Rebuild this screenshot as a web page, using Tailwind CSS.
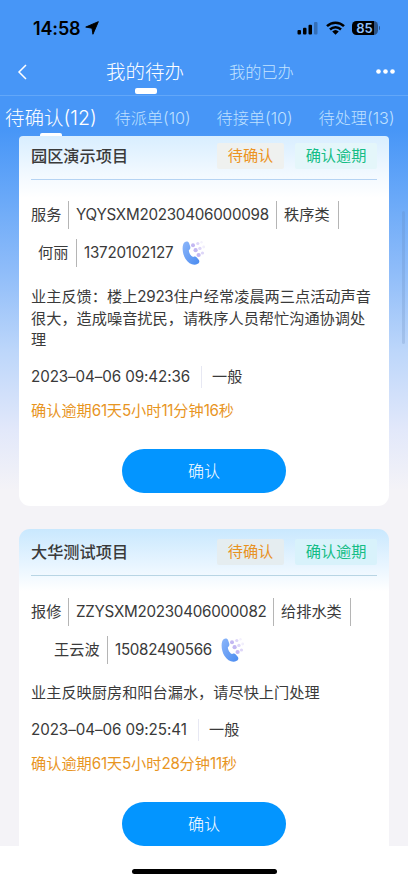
<!DOCTYPE html>
<html lang="zh-CN">
<head>
<meta charset="utf-8">
<meta name="viewport" content="width=device-width, initial-scale=1">
<title>我的待办</title>
<script src="https://cdn.jsdelivr.net/npm/@tailwindcss/browser@4"></script>
</head>
<body class="relative flex h-[883px] w-[408px] flex-col overflow-hidden whitespace-nowrap bg-[linear-gradient(180deg,#4796f7_0px,#4796f7_130px,#8ebcf9_270px,#bcd6fa_350px,#e2e8fa_430px,#f4f3f7_490px)] font-['Inter','Noto_Sans_CJK_SC',sans-serif] text-[15.2px] text-[#3a3a3a]">
<svg class="absolute h-0 w-0">
  <defs>
    <linearGradient id="ph" x1="0" y1="0" x2="1" y2="1"><stop offset="0" stop-color="#8cb6fa"/><stop offset="1" stop-color="#4a8bf0"/></linearGradient>
    <symbol id="phone" viewBox="0 0 24 26">
      <path d="M2.600 2.300C4.400.9 6.500 1.500 7.200 3.400l1 3.200c.5 1.600-.1 2.500-1.300 3.500-.2 2.500 2.100 6.200 4.300 6.900 1.400-.7 2.600-.6 3.600.4l1.900 2.300c1.200 1.600.6 3.100-1 4.100-3.800 2.200-9 .3-12.300-5C.2 13.400-.5 4.900 2.600 2.300z" fill="url(#ph)"/>
      <g fill="#c3b8f2"><circle cx="11" cy="5.300" r="2"/><circle cx="13.600" cy="10.200" r="2.100"/><circle cx="16.600" cy="15" r="2.100"/></g>
      <g fill="#ddd6f8"><circle cx="15.800" cy="3.500" r="1.600"/><circle cx="17.900" cy="8.400" r="1.700"/><circle cx="20.500" cy="13" r="1.600"/></g>
      <circle cx="21.700" cy="7" r="1.400" fill="#f1eefc"/><circle cx="19.500" cy="2.300" r="1.200" fill="#f4f1fd"/>
    </symbol>
  </defs>
</svg>

<header class="h-[54px] shrink-0 pt-[18px]">
  <div class="flex h-5 items-center pl-[33px] pr-[28px] text-black">
    <span class="w-[51px] text-[18px] font-semibold tracking-[-0.15px]">14:58</span>
    <svg class="ml-px h-[14px] w-[14px]" viewBox="0 0 15 15"><path d="M14.300.7 8.500 14.200 7.500 7.700.8 6.500z" fill="#000" stroke="#000" stroke-width="1" stroke-linejoin="round"/></svg>
    <svg class="ml-auto h-[14px] w-[22px]" viewBox="0 0 22 14"><rect x="0.500" y="9" width="3.500" height="4.500" rx="1"/><rect x="6" y="6.700" width="3.500" height="6.800" rx="1"/><rect x="11.500" y="3.800" width="3.500" height="9.700" rx="1"/><rect x="17" y="1" width="3.500" height="12.500" rx="1" fill="#356fb7"/></svg>
    <svg class="ml-[7px] h-[14px] w-[19px]" viewBox="0 0 19 14"><g fill="none" stroke="#000" stroke-width="2.500"><path d="M1 5.200a12.200 12.200 0 0 1 17 0"/><path d="M4 8.500a7.900 7.900 0 0 1 11 0"/></g><path d="m6.200 10.500 3.300 3.300 3.300-3.300a4.800 4.800 0 0 0-6.600 0z"/></svg>
    <div class="ml-[7px] flex h-[14px] w-[26px] items-center justify-center rounded-[4.500px] bg-[linear-gradient(90deg,#000_86%,#2b5488_86%)] text-[13px] font-semibold leading-[14px] text-[#8fc2ff]">85</div>
    <div class="ml-px h-1 w-[1.500px] rounded-r bg-[#2b5488]"></div>
  </div>
</header>

<nav class="flex h-[42px] shrink-0 items-center border-b border-[#62a7f9] pb-[6px] text-white">
  <svg class="ml-[17px] h-4 w-[10px]" viewBox="0 0 10 16"><path d="M9 1 2 8l7 7" fill="none" stroke="#fff" stroke-width="1.500"/></svg>
  <div class="relative ml-[79px] w-[79px] text-[19.500px] font-light leading-[34px]">我的待办<span class="absolute left-[28.500px] top-[33px] h-[6px] w-[22px] rounded-[2px] bg-white"></span></div>
  <div class="ml-[44px] w-[66px] pt-[2px] text-[16.200px] font-light text-[#c4e4ff]">我的已办</div>
  <svg class="ml-[81px] h-[5px] w-[19px]" viewBox="0 0 19 5" fill="#fff"><circle cx="2.500" cy="2.500" r="2.300"/><circle cx="9.500" cy="2.500" r="2.300"/><circle cx="16.500" cy="2.500" r="2.300"/></svg>
</nav>

<nav class="flex h-[40px] shrink-0 items-center pl-[5px] pt-[4px] font-light text-[#bfe0ff]">
  <div class="relative w-[109.500px] text-[19.500px] leading-[35px] text-white">待确认<span>(12)</span><span class="absolute left-[35px] top-[32px] h-[6px] w-[22px] rounded-[2px] bg-white"></span></div>
  <div class="w-[102px] text-[16.200px]">待派单<span>(10)</span></div>
  <div class="w-[102px] text-[16.200px]">待接单<span>(10)</span></div>
  <div class="text-[16.200px]">待处理<span>(13)</span></div>
</nav>

<main class="relative flex h-[710px] shrink-0 flex-col gap-[23px] overflow-hidden px-[19px]">
  <span class="absolute right-[3px] top-[75px] h-[133px] w-[3px] rounded-full bg-[#5b7fb0]/20"></span>

  <article class="h-[370px] shrink-0 rounded-t-[4px] rounded-b-[11px] bg-[linear-gradient(180deg,#d8eeff_0px,#f0f8ff_35px,#fff_62px)] pl-[12px] pr-[12px]">
    <div class="flex h-[44px] items-center border-b border-[#b5d3f3] pb-[3px]">
      <h2 class="text-[16.200px] font-medium">园区演示项目</h2>
      <span class="ml-auto flex h-[26px] w-[67px] items-center justify-center rounded-[2px] bg-[#eff1ef] text-[#ec9322]">待确认</span>
      <span class="ml-[11px] flex h-[26px] w-[82px] items-center justify-center rounded-[2px] bg-[#e4f6fa] text-[#14bd85]">确认逾期</span>
    </div>
    <div class="mt-[21px] flex h-[28px] items-center">
      <span class="w-[37px]">服务</span>
      <span class="flex h-[28px] w-[209px] items-center border-x border-[#b5b5b5] pl-[7px] tracking-[-0.25px]">YQYSXM20230406000098</span>
      <span class="flex h-[28px] w-[62px] items-center border-r border-[#b5b5b5] pl-[7px]">秩序类</span>
    </div>
    <div class="mt-[10px] flex h-[28px] items-center">
      <span class="ml-[7px] w-[38px]">何丽</span>
      <span class="flex h-[28px] w-[106px] items-center border-l border-[#b5b5b5] pl-[7px] tracking-[-0.25px]">13720102127</span>
      <svg class="h-[26px] w-[24px]"><use href="#phone"/></svg>
    </div>
    <p class="mt-[19px] h-[65px] leading-[21.600px]">业主反馈：楼上<span class="tracking-[-0.3px]">2923</span>住户经常凌晨两三点活动声音<br>很大，造成噪音扰民，请秩序人员帮忙沟通协调处<br>理</p>
    <div class="mt-[15px] flex h-[22px] items-center">
      <span class="w-[170px] tracking-[-0.1px]">2023–04–06 09:42:36</span>
      <span class="flex h-[22px] items-center border-l border-[#e7e8f3] pl-[10px]">一般</span>
    </div>
    <div class="mt-[11px] h-[23px] leading-[23px] text-[#e8951f]">确认逾期<span class="tracking-[-0.25px]">61</span>天<span class="tracking-[-0.25px]">5</span>小时<span class="tracking-[-0.25px]">11</span>分钟<span class="tracking-[-0.25px]">16</span>秒</div>
    <button class="ml-[91px] mt-[27px] block h-[44px] w-[164px] rounded-full bg-[#0395ff] text-[16px] font-light text-white">确认</button>
  </article>

  <article class="h-[370px] shrink-0 rounded-[11px] bg-[linear-gradient(180deg,#c9e8fe_0px,#e8f5ff_36px,#fff_62px)] pl-[12px] pr-[12px]">
    <div class="flex h-[47px] items-center border-b border-[#b8d5e4]">
      <h2 class="text-[16.200px] font-medium">大华测试项目</h2>
      <span class="ml-auto flex h-[26px] w-[67px] items-center justify-center rounded-[2px] bg-[#e5edf0] text-[#e8921f]">待确认</span>
      <span class="ml-[11px] flex h-[26px] w-[82px] items-center justify-center rounded-[2px] bg-[#d8f2fb] text-[#14bd85]">确认逾期</span>
    </div>
    <div class="mt-[22px] flex h-[28px] items-center">
      <span class="w-[37px]">报修</span>
      <span class="flex h-[28px] w-[206px] items-center border-x border-[#b5b5b5] pl-[7px] tracking-[-0.27px]">ZZYSXM20230406000082</span>
      <span class="flex h-[28px] w-[77px] items-center border-r border-[#b5b5b5] pl-[7px]">给排水类</span>
    </div>
    <div class="mt-[10px] flex h-[28px] items-center">
      <span class="ml-[23px] w-[53px]">王云波</span>
      <span class="flex h-[28px] w-[114px] items-center border-l border-[#b5b5b5] pl-[7px] tracking-[-0.3px]">15082490566</span>
      <svg class="h-[26px] w-[24px]"><use href="#phone"/></svg>
    </div>
    <p class="mt-[18px] h-[22px] leading-[22px]">业主反映厨房和阳台漏水，请尽快上门处理</p>
    <div class="mt-[15px] flex h-[22px] items-center">
      <span class="w-[167px] tracking-[-0.08px]">2023–04–06 09:25:41</span>
      <span class="flex h-[22px] items-center border-l border-[#e7e8f3] pl-[10px]">一般</span>
    </div>
    <div class="mt-[11px] h-[23px] leading-[23px] text-[#e8951f]">确认逾期<span class="tracking-[-0.25px]">61</span>天<span class="tracking-[-0.25px]">5</span>小时<span class="tracking-[-0.25px]">28</span>分钟<span class="tracking-[-0.25px]">11</span>秒</div>
    <button class="ml-[91px] mt-[27px] block h-[44px] w-[164px] rounded-full bg-[#0395ff] text-[16px] font-light text-white">确认</button>
  </article>
</main>

<footer class="flex h-[37px] shrink-0 justify-center bg-white pt-[23px]"><span class="h-[5px] w-[145px] rounded-full bg-black"></span></footer>
</body>
</html>
